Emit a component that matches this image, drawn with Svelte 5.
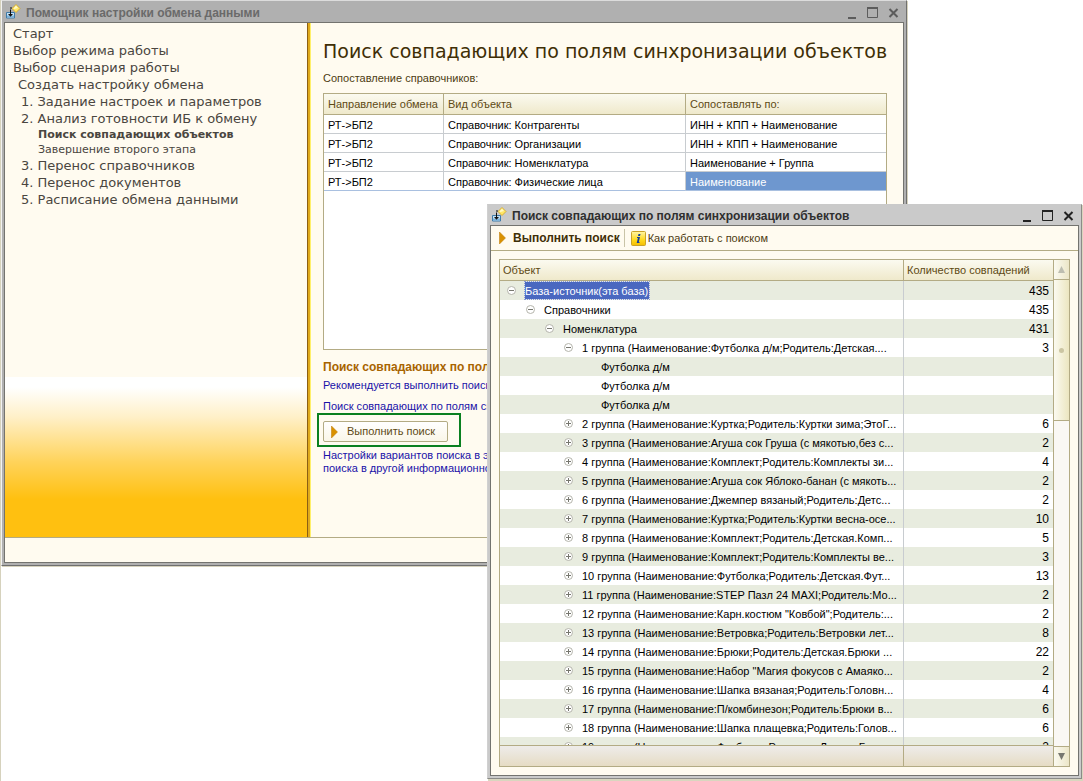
<script>
  const steps = [
    { text: 'Старт', kind: 'top' },
    { text: 'Выбор режима работы', kind: 'top' },
    { text: 'Выбор сценария работы', kind: 'top' },
    { text: 'Создать настройку обмена', kind: 'mid' },
    { text: '1. Задание настроек и параметров', kind: 'num' },
    { text: '2. Анализ готовности ИБ к обмену', kind: 'num' },
    { text: 'Поиск совпадающих объектов', kind: 'sub current' },
    { text: 'Завершение второго этапа', kind: 'sub' },
    { text: '3. Перенос справочников', kind: 'num' },
    { text: '4. Перенос документов', kind: 'num' },
    { text: '5. Расписание обмена данными', kind: 'num' }
  ];

  const mappings = [
    ['РТ->БП2', 'Справочник: Контрагенты', 'ИНН + КПП + Наименование'],
    ['РТ->БП2', 'Справочник: Организации', 'ИНН + КПП + Наименование'],
    ['РТ->БП2', 'Справочник: Номенклатура', 'Наименование + Группа'],
    ['РТ->БП2', 'Справочник: Физические лица', 'Наименование']
  ];
  let picked = $state(3);

  const tree = [
    { level: 0, mark: 'minus', text: 'База-источник(эта база)', count: '435' },
    { level: 1, mark: 'minus', text: 'Справочники', count: '435' },
    { level: 2, mark: 'minus', text: 'Номенклатура', count: '431' },
    { level: 3, mark: 'minus', text: '1 группа (Наименование:Футболка д/м;Родитель:Детская....', count: '3' },
    { level: 4, mark: '', text: 'Футболка д/м', count: '' },
    { level: 4, mark: '', text: 'Футболка д/м', count: '' },
    { level: 4, mark: '', text: 'Футболка д/м', count: '' },
    { level: 3, mark: 'plus', text: '2 группа (Наименование:Куртка;Родитель:Куртки зима;ЭтоГ...', count: '6' },
    { level: 3, mark: 'plus', text: '3 группа (Наименование:Агуша сок Груша (с мякотью,без с...', count: '2' },
    { level: 3, mark: 'plus', text: '4 группа (Наименование:Комплект;Родитель:Комплекты зи...', count: '4' },
    { level: 3, mark: 'plus', text: '5 группа (Наименование:Агуша сок Яблоко-банан (с мякоть...', count: '2' },
    { level: 3, mark: 'plus', text: '6 группа (Наименование:Джемпер вязаный;Родитель:Детс...', count: '2' },
    { level: 3, mark: 'plus', text: '7 группа (Наименование:Куртка;Родитель:Куртки весна-осе...', count: '10' },
    { level: 3, mark: 'plus', text: '8 группа (Наименование:Комплект;Родитель:Детская.Комп...', count: '5' },
    { level: 3, mark: 'plus', text: '9 группа (Наименование:Комплект;Родитель:Комплекты ве...', count: '3' },
    { level: 3, mark: 'plus', text: '10 группа (Наименование:Футболка;Родитель:Детская.Фут...', count: '13' },
    { level: 3, mark: 'plus', text: '11 группа (Наименование:STEP Пазл 24 MAXI;Родитель:Мо...', count: '2' },
    { level: 3, mark: 'plus', text: '12 группа (Наименование:Карн.костюм "Ковбой";Родитель:...', count: '2' },
    { level: 3, mark: 'plus', text: '13 группа (Наименование:Ветровка;Родитель:Ветровки лет...', count: '8' },
    { level: 3, mark: 'plus', text: '14 группа (Наименование:Брюки;Родитель:Детская.Брюки ...', count: '22' },
    { level: 3, mark: 'plus', text: '15 группа (Наименование:Набор "Магия фокусов с Амаяко...', count: '2' },
    { level: 3, mark: 'plus', text: '16 группа (Наименование:Шапка вязаная;Родитель:Головн...', count: '4' },
    { level: 3, mark: 'plus', text: '17 группа (Наименование:П/комбинезон;Родитель:Брюки в...', count: '6' },
    { level: 3, mark: 'plus', text: '18 группа (Наименование:Шапка плащевка;Родитель:Голов...', count: '6' },
    { level: 3, mark: 'plus', text: '19 группа (Наименование:Футболка;Родитель:Летняя.Ба...', count: '2' }
  ];
</script>

{#snippet appIcon()}
  <svg class="app-icon" width="16" height="16" viewBox="0 0 16 16" aria-hidden="true">
    <path d="M1.500 8.500h8v5.500h-8z" fill="#c4e1f5" stroke="#3f7ba8" stroke-linejoin="round" />
    <path d="M2 12.500h7" stroke="#7db4dc" stroke-width="2" />
    <path d="M11 .5l4 4-4 4-4-4z" fill="#ffe766" stroke="#d3a320" stroke-width="0.800" />
    <path d="M11 1.500l2 2.500-3.500 1-1-.5z" fill="#fff9c8" />
    <path d="M5 4h1M7 4h-1M5 6h1M5 8h1M5 9h1" stroke="#111" />
    <path d="M5.500 6v5" stroke="#111" />
    <path d="M3 10h5l-2.500 2.700z" fill="#111" />
  </svg>
{/snippet}

{#snippet windowButtons()}
  <div class="window-buttons">
    <button aria-label="Свернуть"><svg width="11" height="12" viewBox="0 0 11 12"><path d="M2 11h8" stroke="currentColor" stroke-width="2" /></svg></button>
    <button aria-label="Развернуть"><svg width="11" height="12" viewBox="0 0 11 12"><path d="M.5 1.500h10v9H.5z" fill="none" stroke="currentColor" /><path d="M0 1h11" stroke="currentColor" stroke-width="2" /></svg></button>
    <button aria-label="Закрыть"><svg width="11" height="12" viewBox="0 0 11 12"><path d="M1.500 2l8 8M9.500 2l-8 8" stroke="currentColor" stroke-width="2" /></svg></button>
  </div>
{/snippet}

{#snippet playIcon()}
  <svg class="play" width="7" height="12" viewBox="0 0 7 12" aria-hidden="true"><path d="M.5 0l6 6-6 6z" fill="#d99100" stroke="#b87400" stroke-width="0.500" /></svg>
{/snippet}

<main class="desktop">
  <section class="window back" aria-label="Помощник настройки обмена данными">
    <header class="titlebar">
      {@render appIcon()}
      <h2>Помощник настройки обмена данными</h2>
      {@render windowButtons()}
    </header>
    <div class="client">
      <div class="wizard">
        <nav class="steps" aria-label="Шаги">
          <ul>
            {#each steps as step}
              <li class={step.kind}>{step.text}</li>
            {/each}
          </ul>
          <div class="glow"></div>
        </nav>
        <div class="page">
          <h1>Поиск совпадающих по полям синхронизации объектов</h1>
          <p class="caption">Сопоставление справочников:</p>
          <div class="mapping-box">
            <table class="mapping">
              <colgroup><col class="c-dir" /><col /><col class="c-by" /></colgroup>
              <thead>
                <tr><th>Направление обмена</th><th>Вид объекта</th><th>Сопоставлять по:</th></tr>
              </thead>
              <tbody>
                {#each mappings as row, i}
                  <tr class:picked={i === picked} onclick={() => (picked = i)}>
                    {#each row as cell}<td>{cell}</td>{/each}
                  </tr>
                {/each}
              </tbody>
            </table>
          </div>
          <h3>Поиск совпадающих по полям</h3>
          <p class="hint">Рекомендуется выполнить поиск</p>
          <p class="hint second">Поиск совпадающих по полям синхронизации</p>
          <div class="highlight">
            <button class="run">{@render playIcon()}<span>Выполнить поиск</span></button>
          </div>
          <p class="hint last">Настройки вариантов поиска в этой и<br />поиска в другой информационной базе</p>
        </div>
      </div>
      <footer class="status"></footer>
    </div>
  </section>

  <section class="window front" aria-label="Поиск совпадающих по полям синхронизации объектов">
    <header class="titlebar">
      {@render appIcon()}
      <h2>Поиск совпадающих по полям синхронизации объектов</h2>
      {@render windowButtons()}
    </header>
    <div class="client">
      <div class="toolbar">
        <button class="strong">{@render playIcon()}<span>Выполнить поиск</span></button>
        <span class="divider"></span>
        <button class="help">
          <svg width="15" height="15" viewBox="0 0 15 15" aria-hidden="true">
            <defs>
              <linearGradient id="info-fill" x1="0" y1="0" x2="0" y2="1"><stop offset="0" stop-color="#fff6a8" /><stop offset="0.600" stop-color="#ffd91c" /><stop offset="1" stop-color="#f4bd00" /></linearGradient>
            </defs>
            <rect x=".5" y=".5" width="14" height="14" rx="1" fill="url(#info-fill)" stroke="#c9a227" />
            <path d="M7.500 3h2l-.5 2h-2zM6 6h3l-1.200 5h.7v1H5.700l1.200-5H6z" fill="#123f9c" />
          </svg>
          <span>Как работать с поиском</span>
        </button>
      </div>
      <div class="results">
        <div class="scroll-area">
          <table class="tree">
            <colgroup><col /><col class="c-count" /></colgroup>
            <thead><tr><th>Объект</th><th>Количество совпадений</th></tr></thead>
            <tbody>
              {#each tree as row, i}
                <tr>
                  <td>
                    <div class="node level{row.level}">
                      {#if row.mark}
                        <svg width="9" height="9" viewBox="0 0 9 9" aria-hidden="true">
                          <circle cx="4.500" cy="4.500" r="4" fill="#fff" stroke="#b4b4ac" />
                          <path d={row.mark === 'plus' ? 'M2 4.500h5M4.500 2v5' : 'M2 4.500h5'} stroke="#77776f" />
                        </svg>
                      {/if}
                      <span class:selected={i === 0}>{row.text}</span>
                    </div>
                  </td>
                  <td class="count">{row.count}</td>
                </tr>
              {/each}
            </tbody>
          </table>
          <div class="totals"><span></span><span></span></div>
        </div>
        <div class="scrollbar">
          <button class="arrow" aria-label="Вверх" disabled><svg width="7" height="7" viewBox="0 0 7 7"><path d="M3.500 0L7 7H0z" fill="#bdbdb0" /></svg></button>
          <div class="thumb"><i></i></div>
          <button class="arrow down" aria-label="Вниз"><svg width="7" height="7" viewBox="0 0 7 7"><path d="M3.500 7L7 0H0z" fill="#77776f" /></svg></button>
        </div>
      </div>
    </div>
  </section>
</main>

<style>
  :global(body) { margin: 0; background: #fff; }
  .desktop {
    position: relative;
    height: 100vh;
    overflow: hidden;
    box-sizing: border-box;
    border-left: 1px solid #d6d2bd;
    font: 11px/13px "Liberation Sans", Arial, sans-serif;
    color: #000;
  }
  h1, h2, h3, p, ul { margin: 0; padding: 0; }
  button { font: inherit; color: inherit; margin: 0; padding: 0; border: 0; background: none; }
  svg { flex: none; display: block; }

  .window { position: absolute; box-sizing: border-box; display: flex; flex-direction: column; }
  .back {
    left: 0; top: 0; width: 906px; max-width: 100%;
    background: #b0b0b0;
    border: 1px solid #707070; border-left-color: #f2f2f2; border-top-color: #dcdcdc;
    box-shadow: 1px 1px 0 #d6d2bd;
    padding: 0 2px 2px;
  }
  .front {
    left: 486px; top: 204px; right: 1px; bottom: 2px;
    background: #cacaca;
    border: 1px solid #8b8b88; border-left-color: #d0d0d0; border-top-color: #cacaca;
    box-shadow: 1px 1px 0 #d9d6bf, 1px 2px 0 #d9d6bf;
    padding: 0 2px 2px;
  }
  .titlebar { display: flex; align-items: center; height: 21px; padding: 0 5px 0 1px; gap: 5px; }
  .front .titlebar { height: 20px; }
  .titlebar h2 { flex: 1; font: bold 12px/16px "Liberation Sans", Arial, sans-serif; white-space: nowrap; color: #6a6a6a; padding-top: 2px; }
  .front h2 { color: #2f2f2f; }
  .window-buttons { display: flex; gap: 10px; padding-top: 2px; color: #5c5c5c; }
  .front .window-buttons { color: #222; }
  .client { border: 1px solid #73736f; background: #fffbf0; display: flex; flex-direction: column; flex: 1; min-height: 0; }

  .wizard { display: flex; border-bottom: 1px solid #b3ab84; }
  .steps { width: 302px; flex: none; display: flex; flex-direction: column; justify-content: space-between; border-right: 1px solid #8c5f14; }
  .steps ul { list-style: none; padding: 2px 0 0 8px; font: 13px/17px "DejaVu Sans", Verdana, sans-serif; color: #4a4640; white-space: nowrap; }
  .steps .mid { padding-left: 5px; }
  .steps .num { padding-left: 8px; }
  .steps .sub { padding-left: 25px; font-size: 11px; line-height: 15px; }
  .steps .current { font-weight: bold; }
  .glow { height: 160px; background: linear-gradient(#fff 0, #fff 10px, #fff0c8 40px, #ffd35a 85px, #ffc010 122px); }

  .page { flex: 1; min-width: 0; border-left: 2px solid #e0aa1c; box-shadow: inset 1px 0 0 #fff06a; padding: 16px 16px 62px 13px; }
  h1 { font: 19px/24px "DejaVu Sans", Verdana, sans-serif; color: #3f2f06; white-space: nowrap; }
  .caption { padding: 9px 0 8px; color: #4d3c10; }
  .mapping-box { border: 1px solid #b3ab84; background: #fff; height: 255px; }
  table { border-collapse: separate; border-spacing: 0; table-layout: fixed; width: 100%; }
  th { font-weight: normal; text-align: left; color: #5e4a14; height: 20px; padding: 0 4px; background: linear-gradient(#fbfaf0, #efe9cb); border-bottom: 1px solid #b3ab84; border-right: 1px solid #b3ab84; white-space: nowrap; }
  th:last-child { border-right: 0; }
  td { white-space: nowrap; overflow: hidden; box-sizing: border-box; height: 19px; padding: 2px 4px 0; }
  .c-dir { width: 120px; }
  .c-by { width: 200px; }
  .mapping td { border-bottom: 1px solid #c8ccd0; border-right: 1px solid #c8ccd0; }
  .mapping td:last-child { border-right: 0; }
  .mapping .picked td { border-bottom-color: #a9c0e0; }
  .mapping .picked td:last-child { background: #6e97cf; color: #fff; }
  h3 { font: bold 12px/16px "Liberation Sans", Arial, sans-serif; color: #a86400; white-space: nowrap; padding-top: 9px; }
  .hint { color: #1a12a8; white-space: nowrap; padding-top: 4px; }
  .second { padding-top: 8px; }
  .highlight { width: 136px; border: 2px solid #0a8020; margin: 0 0 2px -6px; padding: 6px 0 3px 4px; display: flex; }
  .run { display: flex; align-items: center; gap: 9px; width: 125px; height: 21px; box-sizing: border-box; border: 1px solid #b3ab84; border-radius: 2px; padding-left: 7px; background: linear-gradient(#fff, #faf6e8); color: #5e4a14; }
  .last { padding-top: 0; }
  .status { height: 24px; }

  .toolbar { display: flex; align-items: center; height: 24px; flex: none; border-bottom: 1px solid #b3ab84; padding-left: 8px; color: #4d3c10; }
  .toolbar button { display: flex; align-items: center; white-space: nowrap; gap: 7px; }
  .strong { font: bold 12px/16px "Liberation Sans", Arial, sans-serif; color: #3f2f06; }
  .divider { width: 1px; height: 18px; background: #c9c4a8; margin: 0 6px 0 4px; }
  .toolbar .help { gap: 2px; }
  .results { flex: 1; min-height: 0; display: flex; margin: 8px; border: 1px solid #b3ab84; background: #fff; }
  .scroll-area { flex: 1; min-width: 0; display: flex; flex-direction: column; overflow: hidden; position: relative; }
  .c-count { width: 149px; }
  .tree th { padding: 0 3px; }
  .tree td { padding: 0 4px 0 3px; }
  .tree tbody tr:nth-child(odd) { background: #e8ecdf; }
  .tree td:first-child { border-right: 1px solid #c8ccd0; }
  .tree .count { text-align: right; padding-top: 2px; font-size: 12px; }
  .node { display: flex; align-items: center; gap: 9px; height: 19px; }
  .node span { padding-top: 2px; }
  .level0 { padding-left: 4px; }
  .level1 { padding-left: 23px; }
  .level2 { padding-left: 42px; }
  .level3 { padding-left: 61px; }
  .level4 { padding-left: 98px; }
  .node .selected { background: #4a68c0; color: #fff; outline: 1px dotted #8898d8; line-height: 15px; padding-right: 1px; }
  .totals { position: absolute; left: 0; right: 0; bottom: 0; display: flex; height: 20px; border-top: 1px solid #b3ab84; background: linear-gradient(#eeecea, #e6dcc4); }
  .totals span:first-child { flex: 1; border-right: 1px solid #b3ab84; }
  .totals span:last-child { width: 149px; }
  .scrollbar { width: 15px; flex: none; display: flex; flex-direction: column; border-left: 1px solid #b3ab84; background: #faf8f4; }
  .arrow { height: 20px; display: grid; place-items: center; border-bottom: 1px solid #b3ab84; background: linear-gradient(90deg, #fbfaf0, #ece6c8); }
  .down { margin-top: auto; border-bottom: 0; border-top: 1px solid #b3ab84; }
  .thumb { height: 140px; display: grid; place-items: center; border-bottom: 1px solid #b3ab84; background: linear-gradient(90deg, #fbfaf0, #ece6c0); }
  .thumb i { width: 5px; height: 5px; border-radius: 3px; background: #cbc5a2; }
</style>
